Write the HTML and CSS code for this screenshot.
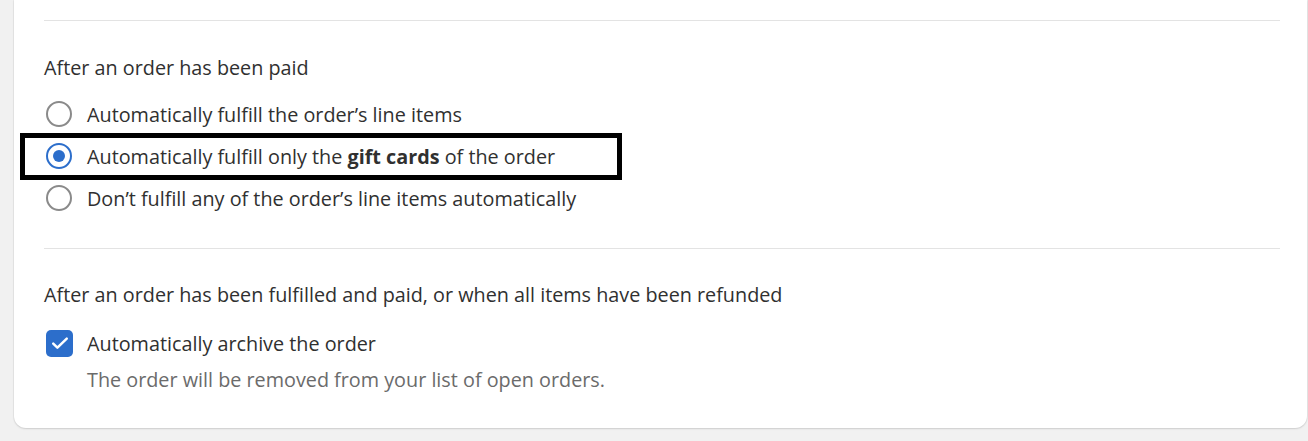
FILE: index.html
```html
<!DOCTYPE html>
<html lang="en">
<head>
<meta charset="utf-8">
<title>Order processing</title>
<link rel="stylesheet" href="styles.css">
</head>
<body>
<div class="card">
  <section class="section first">
    <div class="heading">After an order has been paid</div>
    <div class="options">
      <label class="option">
        <span class="radio"></span>
        <span class="label">Automatically fulfill the order’s line items</span>
      </label>
      <label class="option highlighted">
        <span class="radio checked"></span>
        <span class="label">Automatically fulfill only the <b>gift cards</b> of the order</span>
      </label>
      <label class="option">
        <span class="radio"></span>
        <span class="label">Don’t fulfill any of the order’s line items automatically</span>
      </label>
    </div>
  </section>
  <section class="section second">
    <div class="heading">After an order has been fulfilled and paid, or when all items have been refunded</div>
    <label class="option check-row">
      <span class="checkbox">
        <svg viewBox="0 0 20 20" width="26" height="26"><path d="M4.8 10.4l3.2 3.2L15.2 6.6" fill="none" stroke="#fff" stroke-width="1.9" stroke-linecap="round" stroke-linejoin="round"/></svg>
      </span>
      <span class="label">Automatically archive the order</span>
    </label>
    <div class="help">The order will be removed from your list of open orders.</div>
  </section>
</div>
</body>
</html>
```
FILE: styles.css
```css
*, *::before, *::after { box-sizing: border-box; }
html, body { margin: 0; padding: 0; }
body {
  background: #f1f1f1;
  font-family: "Open Sans", "Noto Sans", sans-serif;
  font-size: 19.8px;
  color: #303030;
  height: 441px;
  overflow: hidden;
}
.card {
  margin-left: 14px;
  width: 1293px;
  background: #fff;
  border-radius: 0 0 12px 12px;
  box-shadow: 0 1px 2px rgba(0,0,0,0.12), 0 0 0 1px rgba(0,0,0,0.03);
  padding: 20px 27px 0 30px;
}
.section {
  border-top: 1px solid #e3e3e3;
}
.section.first { padding: 33px 0 29px; }
.section.second { padding: 32px 0 34px; }
.heading { line-height: 28px; }
.options { margin-top: 11px; display: flex; flex-direction: column; }
.option {
  display: flex;
  align-items: center;
  height: 42px;
  padding-left: 2px;
  gap: 15px;
  position: relative;
}
.radio {
  width: 26px; height: 26px;
  border-radius: 50%;
  border: 2.5px solid #8a8a8a;
  display: flex; align-items: center; justify-content: center;
  flex: none;
}
.radio.checked { border-color: #2c6ecb; }
.radio.checked::before {
  content: "";
  width: 12px; height: 12px;
  border-radius: 50%;
  background: #2c6ecb;
}
.label b { font-weight: 700; }
.highlighted::after {
  content: "";
  position: absolute;
  left: -24px; top: -2px;
  width: 602px; height: 47px;
  border: 5px solid #000;
}
.check-row { margin-top: 13px; gap: 14px; }
.checkbox {
  width: 27px; height: 27px;
  border-radius: 5px;
  background: #2c6ecb;
  display: flex; align-items: center; justify-content: center;
  flex: none;
}
.help {
  padding-left: 43px;
  line-height: 28px;
  color: #6b6b6b;
  margin-top: 2px;
}
```
